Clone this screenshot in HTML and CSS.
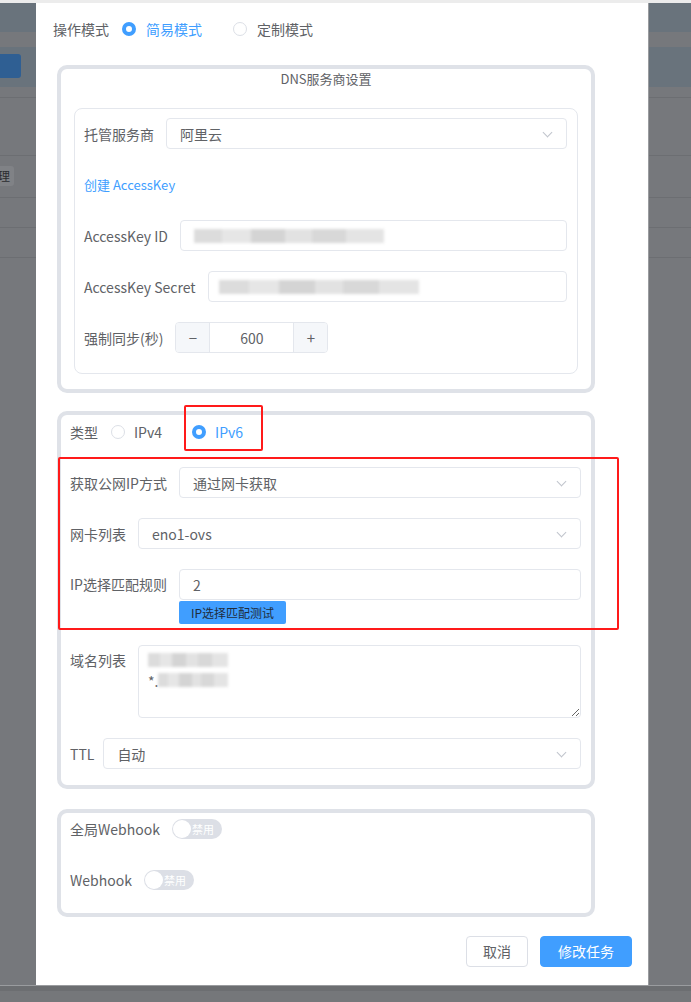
FILE: index.html
```html
<!DOCTYPE html>
<html lang="zh-CN">
<head>
    <meta charset="UTF-8">
    <meta name="viewport" content="width=device-width, initial-scale=1.0">
    <title>修改任务</title>
    <link rel="stylesheet" href="styles.css">
</head>
<body>
    <div class="top-line"></div>
    <div class="screen">
        <div class="side side-left">
            <div class="band blue h30"></div>
            <div class="band gray h15"></div>
            <div class="band blue h40"><span class="bg-btn"></span></div>
            <div class="band gray h10 line"></div>
            <div class="band gray h58 line"></div>
            <div class="band gray h42 line"><span class="bg-tag">理</span></div>
            <div class="band gray h30 line"></div>
            <div class="band gray h30 line"></div>
            <div class="band gray rest"></div>
        </div>

        <div class="modal">
            <div class="row mode-row">
                <span class="label">操作模式</span>
                <span class="radio checked"></span><span class="radio-text active">简易模式</span>
                <span class="radio"></span><span class="radio-text">定制模式</span>
            </div>

            <div class="card card-dns">
                <div class="card-title">DNS服务商设置</div>
                <div class="inner-card">
                    <div class="row">
                        <span class="label">托管服务商</span>
                        <div class="select">阿里云<span class="chevron"></span></div>
                    </div>
                    <div class="row">
                        <span class="link">创建 AccessKey</span>
                    </div>
                    <div class="row">
                        <span class="label">AccessKey ID</span>
                        <div class="input"><span class="blur w190"></span></div>
                    </div>
                    <div class="row">
                        <span class="label">AccessKey Secret</span>
                        <div class="input secret"><span class="blur w200"></span></div>
                    </div>
                    <div class="row">
                        <span class="label">强制同步(秒)</span>
                        <div class="number">
                            <span class="step">&minus;</span>
                            <span class="num-value">600</span>
                            <span class="step">+</span>
                        </div>
                    </div>
                </div>
            </div>

            <div class="card card-ip">
                <div class="row type-row">
                    <span class="label">类型</span>
                    <span class="radio"></span><span class="radio-text">IPv4</span>
                    <span class="radio checked"></span><span class="radio-text active">IPv6</span>
                </div>
                <div class="row">
                    <span class="label">获取公网IP方式</span>
                    <div class="select">通过网卡获取<span class="chevron"></span></div>
                </div>
                <div class="row">
                    <span class="label">网卡列表</span>
                    <div class="select">eno1-ovs<span class="chevron"></span></div>
                </div>
                <div class="row row-rule">
                    <span class="label">IP选择匹配规则</span>
                    <div class="rule-box">
                        <div class="input">2</div>
                        <span class="test-btn">IP选择匹配测试</span>
                    </div>
                </div>
                <div class="row row-top">
                    <span class="label">域名列表</span>
                    <div class="textarea">
                        <div><span class="blur w80"></span></div>
                        <div>*.<span class="blur w70"></span></div>
                    </div>
                </div>
                <div class="row">
                    <span class="label ttl">TTL</span>
                    <div class="select">自动<span class="chevron"></span></div>
                </div>
            </div>

            <div class="card card-hook">
                <div class="row">
                    <span class="label">全局Webhook</span>
                    <span class="switch"><span class="knob"></span>禁用</span>
                </div>
                <div class="row">
                    <span class="label">Webhook</span>
                    <span class="switch"><span class="knob"></span>禁用</span>
                </div>
            </div>

            <div class="footer">
                <span class="btn">取消</span>
                <span class="btn primary">修改任务</span>
            </div>

            <!-- annotation boxes from the screenshot -->
            <div class="mark mark-type"></div>
            <div class="mark mark-rule"></div>
        </div>

        <div class="side side-right">
            <div class="band blue h30"></div>
            <div class="band gray h15"></div>
            <div class="band blue h40"></div>
            <div class="band gray h10 line"></div>
            <div class="band gray h58 line"></div>
            <div class="band gray h42 line"></div>
            <div class="band gray h30 line"></div>
            <div class="band gray h30 line"></div>
            <div class="band gray rest"></div>
        </div>
    </div>
    <div class="bottom"></div>
</body>
</html>
```

FILE: styles.css
```css
body {
    margin: 0;
    background-color: #76787c;
    font-family: "Noto Sans CJK SC", "Noto Sans", sans-serif;
    font-size: 14px;
    color: #606266;
    overflow: hidden;
}

.top-line {
    height: 3px;
    background-color: #ececec;
}

.screen {
    display: flex;
    height: 982px;
}

.side {
    display: flex;
    flex-direction: column;
    background-color: #76787c;
}

.side-left {
    width: 36px;
}

.side-right {
    flex: 1;
    border-left: 1px solid #9a9c9f;
}

.band {
    position: relative;
    flex: none;
}

.band.blue {
    background-color: #69737c;
}

.band.gray {
    background-color: #76787c;
}

.band.line {
    border-bottom: 1px solid #6c6e72;
}

.h10 { height: 10px; }
.h15 { height: 15px; }
.h30 { height: 29px; }
.h40 { height: 40px; }
.h42 { height: 41px; }
.h58 { height: 57px; }

.band.rest {
    flex: 1;
}

.bg-btn {
    position: absolute;
    left: 0;
    top: 7px;
    width: 21px;
    height: 24px;
    background-color: #2f5f93;
    border-radius: 0 3px 3px 0;
}

.bg-tag {
    position: absolute;
    left: -6px;
    top: 10px;
    padding: 0 4px;
    height: 20px;
    line-height: 20px;
    font-size: 12px;
    color: #2b2d30;
    background-color: #808286;
    border-radius: 3px;
}

.modal {
    position: relative;
    width: 612px;
    background-color: #fff;
    padding: 10px 16px 17px 21px;
    box-sizing: border-box;
    display: flex;
    flex-direction: column;
}

.modal > * {
    flex-shrink: 0;
}

.row {
    display: flex;
    align-items: center;
    gap: 12px;
    height: 31px;
    margin-bottom: 20px;
}

.row:last-child {
    margin-bottom: 0;
}

.label {
    flex: none;
    white-space: nowrap;
}

.label.ttl {
    margin-right: -3px;
}

.mode-row {
    margin-bottom: 21px;
    margin-left: -4px;
    gap: 0;
}

.mode-row .label,
.type-row .label {
    margin-right: 13px;
}

.radio {
    flex: none;
    width: 12px;
    height: 12px;
    border: 1px solid #dcdfe6;
    border-radius: 50%;
    background-color: #fff;
    margin-right: 10px;
}

.radio.checked {
    width: 6px;
    height: 6px;
    border: 4px solid #409eff;
    background-color: #fff;
}

.radio-text {
    margin-right: 33px;
}

.mode-row .radio-text {
    margin-right: 31px;
}

.radio-text.active {
    color: #409eff;
}

.card {
    width: 538px;
    border: 4px solid #dfe2e8;
    border-radius: 10px;
    box-sizing: border-box;
}

.card-dns {
    padding: 0 13px 15px;
    margin-bottom: 18px;
    height: 328px;
}

.card-title {
    text-align: center;
    font-size: 13px;
    line-height: 20px;
    padding: 0 0 19px;
}

.inner-card {
    border: 1px solid #e4e7ed;
    border-radius: 8px;
    padding: 9px 10px 20px 9px;
}

.select,
.input,
.textarea {
    flex: 1;
    height: 31px;
    border: 1px solid #e4e7ed;
    border-radius: 4px;
    box-sizing: border-box;
    padding: 0 13px;
    display: flex;
    align-items: center;
    position: relative;
    color: #606266;
}

.input.secret {
    padding-left: 10px;
}

.chevron {
    position: absolute;
    right: 15px;
    top: 10px;
    width: 6px;
    height: 6px;
    border-right: 1px solid #c0c4cc;
    border-bottom: 1px solid #c0c4cc;
    transform: rotate(45deg);
}

.link {
    color: #409eff;
    font-size: 13px;
}

.blur {
    display: inline-block;
    height: 14px;
    background: linear-gradient(90deg, #dcdcdc 0 15%, #e6e6e6 15% 30%, #d4d4d4 30% 48%, #e2e2e2 48% 62%, #d8d8d8 62% 80%, #e4e4e4 80%);
    filter: blur(1.5px);
}

.w190 { width: 190px; }
.w200 { width: 200px; }
.w80 { width: 80px; }
.w70 { width: 70px; }

.number {
    display: flex;
    width: 153px;
    height: 31px;
    border: 1px solid #e4e7ed;
    border-radius: 4px;
    box-sizing: border-box;
    overflow: hidden;
}

.step {
    width: 33px;
    background-color: #f5f7fa;
    color: #606266;
    display: flex;
    align-items: center;
    justify-content: center;
    font-size: 15px;
}

.step:first-child {
    border-right: 1px solid #e4e7ed;
}

.step:last-child {
    border-left: 1px solid #e4e7ed;
}

.num-value {
    flex: 1;
    display: flex;
    align-items: center;
    justify-content: center;
}

.card-ip {
    padding: 1px 10px 16px 9px;
    margin-bottom: 20px;
}

.type-row {
    gap: 0;
}

.type-row .radio {
    margin-right: 9px;
}

.type-row .radio-text {
    margin-right: 30px;
}

.row-rule {
    height: auto;
    align-items: flex-start;
    margin-bottom: 21px;
}

.row-rule .label {
    line-height: 31px;
}

.rule-box {
    flex: 1;
    display: flex;
    flex-direction: column;
    align-items: flex-start;
}

.rule-box .input {
    flex: none;
    width: 100%;
}

.test-btn {
    margin-top: 1px;
    height: 23px;
    line-height: 23px;
    padding: 0 12px;
    font-size: 12px;
    color: #1f2d3d;
    background-color: #409eff;
    border-radius: 2px;
}

.row-top {
    height: 73px;
    align-items: flex-start;
}

.row-top .label {
    line-height: 31px;
}

.textarea {
    height: 73px;
    flex-direction: column;
    align-items: flex-start;
    justify-content: flex-start;
    padding: 5px 9px;
    line-height: 20px;
    resize: both;
    overflow: auto;
}

.card-hook {
    padding: 0 10px 18px 9px;
    margin-bottom: 19px;
}

.switch {
    position: relative;
    display: inline-flex;
    align-items: center;
    justify-content: flex-end;
    width: 50px;
    height: 20px;
    padding-right: 8px;
    box-sizing: border-box;
    border-radius: 10px;
    background-color: #dcdfe6;
    color: #fff;
    font-size: 11px;
}

.knob {
    position: absolute;
    left: 1px;
    top: 1px;
    width: 18px;
    height: 18px;
    border-radius: 50%;
    background-color: #fff;
}

.footer {
    display: flex;
    justify-content: flex-end;
    gap: 12px;
}

.btn {
    height: 31px;
    line-height: 29px;
    padding: 0 16px;
    border: 1px solid #dcdfe6;
    border-radius: 4px;
    background-color: #fff;
    color: #606266;
    font-size: 14px;
    box-sizing: border-box;
}

.btn.primary {
    background-color: #409eff;
    border-color: #409eff;
    color: #fff;
    padding: 0 17px;
}

.mark {
    position: absolute;
    border: 2px solid #ff1a1a;
    border-radius: 2px;
    box-sizing: border-box;
}

.mark-type {
    left: 148px;
    top: 402px;
    width: 79px;
    height: 46px;
}

.mark-rule {
    left: 22px;
    top: 454px;
    width: 561px;
    height: 173px;
}

.bottom {
    height: 17px;
    border-top: 1px solid #9a9c9f;
    background: linear-gradient(#6c6e71 0 5px, #75777a 5px);
}
```
